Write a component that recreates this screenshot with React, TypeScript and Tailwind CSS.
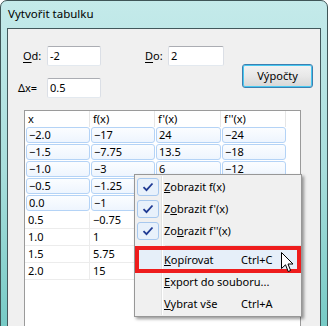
import type { ReactNode } from 'react';

const rows = [
  ['−2.0', '−17', '24', '−24'],
  ['−1.5', '−7.75', '13.5', '−18'],
  ['−1.0', '−3', '6', '−12'],
  ['−0.5', '−1.25', '1.5', '−6'],
  ['0.0', '−1', '0', '0'],
  ['0.5', '−0.75', '1.5', '6'],
  ['1.0', '1', '6', '12'],
  ['1.5', '5.75', '13.5', '18'],
  ['2.0', '15', '24', '24'],
];
const headers = ['x', 'f(x)', "f'(x)", "f''(x)"];
const colW = ['w-[65px]', 'w-[65px]', 'w-[66px]', 'w-[65px]'];
const selectedCount = 5;

function TextBox({ value, width }: { value: string; width: string }) {
  return (
    <div
      className={`${width} h-[20px] rounded-[2px] border border-[#abadb3] border-b-[#e3e9ef] border-x-[#dbdfe6] bg-white pl-[2px] flex items-center`}
    >
      {value}
    </div>
  );
}

function Check() {
  return (
    <div className="ml-[2px] w-[22px] h-[18px] rounded-[3px] border border-[#a7c8ee] bg-[#e8f1fb] flex items-center justify-center">
      <svg width="12" height="10" viewBox="0 0 12 10">
        <path d="M1.5 5.2 L4.5 8.2 L10.5 1.5" fill="none" stroke="#1f3a93" strokeWidth="1.8" />
      </svg>
    </div>
  );
}

function MenuItem({ checked, label, shortcut }: { checked?: boolean; label: ReactNode; shortcut?: string }) {
  return (
    <div className="flex h-[22px]">
      <div className="w-[27px] shrink-0 border-r border-[#e2e3e3] flex items-center">{checked && <Check />}</div>
      <div className="w-px bg-white" />
      <div className="flex items-center pl-[1px] flex-1 whitespace-nowrap">
        <span className="w-[77px] shrink-0">{label}</span>
        {shortcut && <span>{shortcut}</span>}
      </div>
    </div>
  );
}

export default function App() {
  return (
    <div className="w-[328px] h-[326px] overflow-hidden relative bg-white font-['Segoe_UI','Noto_Sans',sans-serif] text-[11px] text-black">
      <div className="h-[340px] flex flex-col rounded-t-[7px] border border-[#3f5557] bg-gradient-to-b from-[#c4eaea] via-[#a8dedc] to-[#72c9c4] px-[6px]">
        <div className="h-[27px] flex items-center pl-[1px] pb-[1px] text-[11.5px]">Vytvořit tabulku</div>
        <div className="flex-1 flex flex-col border border-[#42585b] bg-[#f0f0f0]">
          <div className="flex pt-[17px]">
            <div className="flex flex-col gap-[12px]">
              <div className="flex items-center h-[20px]">
                <span className="w-[39px] pl-[15px]">
                  <u className="underline-offset-2">O</u>d:
                </span>
                <TextBox value="-2" width="w-[54px]" />
                <span className="ml-[44px] w-[23px]">
                  <u className="underline-offset-2">D</u>o:
                </span>
                <TextBox value="2" width="w-[56px]" />
              </div>
              <div className="flex items-center h-[20px]">
                <span className="w-[39px] pl-[10px]">Δx=</span>
                <TextBox value="0.5" width="w-[54px]" />
              </div>
            </div>
            <button className="ml-[18px] mt-[18px] w-[71px] h-[24px] rounded-[3px] border border-[#3c7fb1] bg-gradient-to-b from-[#f3f3f3] via-[#e8e8e8] to-[#d6d6d6] shadow-[inset_0_0_0_1px_#48c8f0]">
              Výpočty
            </button>
          </div>
          <div className="mt-[12px] ml-[16px] w-[277px] flex-1 border border-b-0 border-[#9a9a9a] bg-white">
            <div className="flex h-[16px]">
              {headers.map((h, i) => (
                <div key={h} className={`${colW[i]} border-r border-[#e6e6e6] pl-[3px] flex items-center`}>
                  {h}
                </div>
              ))}
            </div>
            {rows.map((r, ri) => (
              <div key={ri} className="flex h-[17px]">
                {r.map((c, ci) =>
                  ri < selectedCount ? (
                    <div key={ci} className={`${colW[ci]} h-[17px] pl-[1px] pb-[1px]`}>
                      <div className="h-full rounded-[3px] border border-[#b4d3f6] bg-gradient-to-b from-[#fbfdff] to-[#eef5fe] pl-[2px] flex items-center">
                        {c}
                      </div>
                    </div>
                  ) : (
                    <div key={ci} className={`${colW[ci]} h-[17px] border-r border-b border-[#ececec] pl-[3px] flex items-center`}>
                      {c}
                    </div>
                  ),
                )}
              </div>
            ))}
          </div>
        </div>
      </div>

      {/* context menu */}
      <div className="absolute left-[134px] top-[174px] w-[168px] h-[143px] border border-[#979797] bg-[#f0f0f0] py-[1px] shadow-[2px_2px_3px_rgba(0,0,0,0.4)]">
        <MenuItem checked label={<><u>Z</u>obrazit f(x)</>} />
        <MenuItem checked label={<>Z<u>o</u>brazit f'(x)</>} />
        <MenuItem checked label={<>Zo<u>b</u>razit f''(x)</>} />
        <div className="flex h-[7px]">
          <div className="w-[27px] shrink-0 border-r border-[#e2e3e3]" />
          <div className="w-px bg-white" />
          <div className="flex-1 ml-[2px] flex flex-col justify-center">
            <div className="h-px bg-[#e0e0e0]" />
            <div className="h-px bg-white" />
          </div>
        </div>
        <div className="bg-[#e6eff9]">
          <MenuItem label={<><u>K</u>opírovat</>} shortcut="Ctrl+C" />
        </div>
        <MenuItem label={<><u>E</u>xport do souboru...</>} />
        <MenuItem label={<><u>V</u>ybrat vše</>} shortcut="Ctrl+A" />
      </div>

      {/* highlight frame */}
      <div className="absolute left-[135px] top-[246px] w-[166px] h-[27px] border-[4px] border-[#ee1c1c]" />

      {/* mouse cursor */}
      <svg className="absolute left-[281px] top-[252px]" width="13" height="21" viewBox="0 0 13 21">
        <path d="M0.5 0.5 L0.5 16.5 L4.5 12.8 L7.2 19.5 L9.6 18.5 L7 12 L12 12 Z" fill="#fff" stroke="#000" strokeWidth="1" strokeLinejoin="miter" />
      </svg>
    </div>
  );
}
